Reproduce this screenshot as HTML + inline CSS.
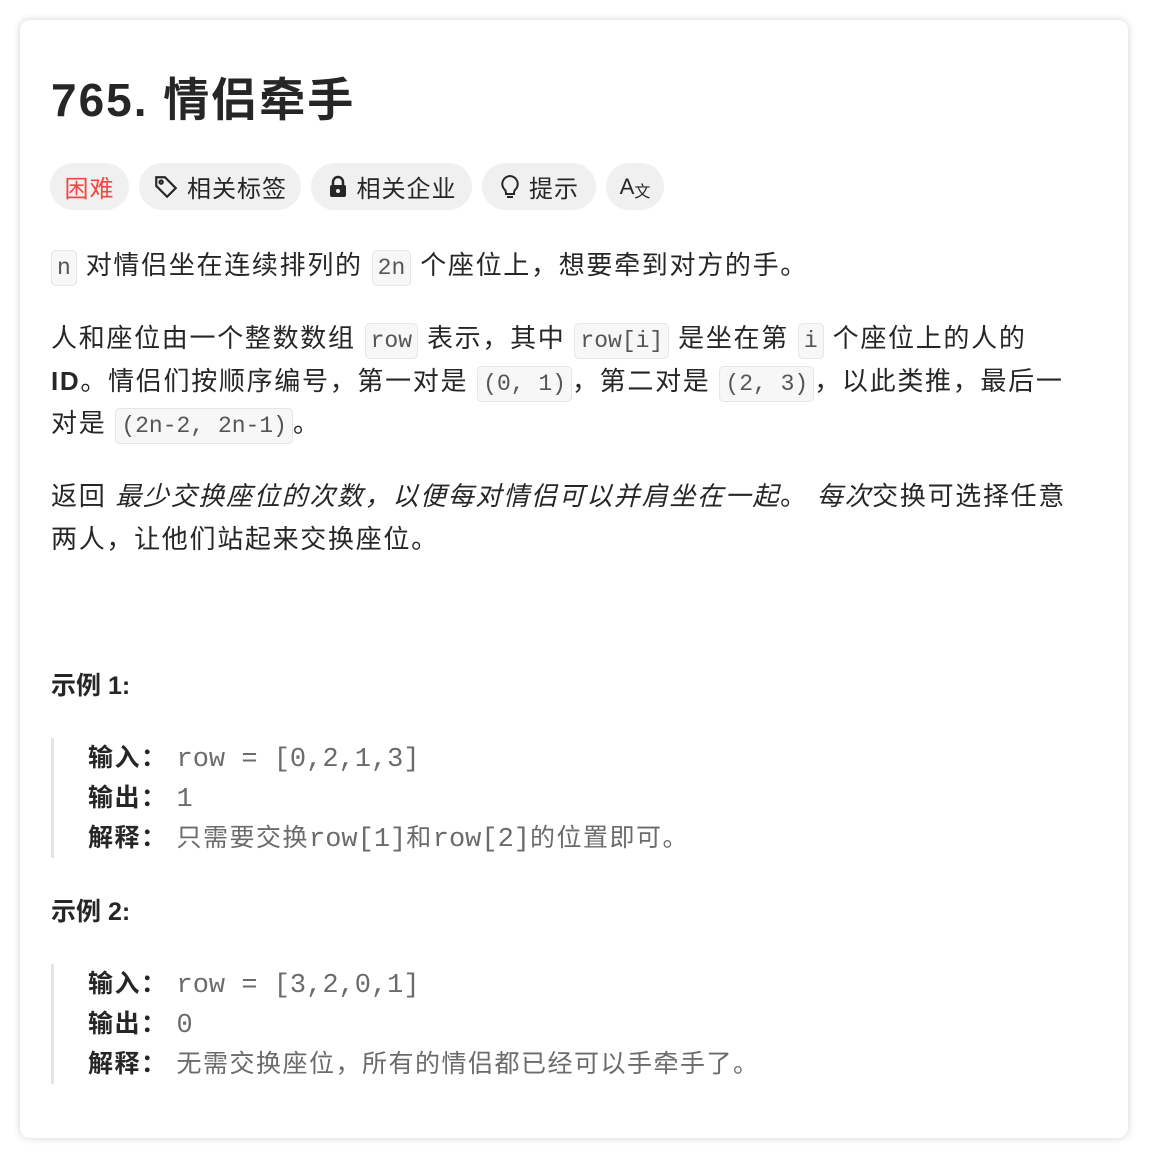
<!DOCTYPE html>
<html><head><meta charset="utf-8"><style>
body{margin:0;background:#fff;width:1150px;height:1160px;overflow:hidden;font-family:"Liberation Sans","Noto Sans CJK SC",sans-serif;color:#262626}
.card{position:absolute;left:20px;top:20px;width:1108px;height:1118px;background:#fff;border-radius:10px;box-shadow:0 0 8px rgba(0,0,0,.18)}
.in{position:absolute;left:31px;top:0;right:30px}
h1{margin:0;position:absolute;top:50px;font-size:46px;line-height:60px;font-weight:bold;letter-spacing:2px;white-space:nowrap}
.tags{position:absolute;top:143px;left:-1px;display:flex;gap:10px}
.tag{height:47px;border-radius:24px;background:#f0f0f0;display:flex;align-items:center;justify-content:center;font-size:24px;letter-spacing:1px;color:#262626;gap:8px;box-sizing:border-box}
p{margin:0;font-size:26px;letter-spacing:1.7px;line-height:42.5px;position:absolute;left:0;right:0;white-space:nowrap}
code{font-family:"Liberation Mono","DejaVu Sans Mono",monospace;font-size:23px;letter-spacing:0;line-height:1;background:#f7f7f7;border:1px solid #e6e6e6;border-radius:5px;padding:4px 5px;color:#555}
.ex{position:absolute;left:0;font-size:25px;font-weight:bold;line-height:40px}
.blk{position:absolute;left:0;border-left:3px solid #e5e5e5;padding-left:34px;font-size:25px;line-height:40px;letter-spacing:1.5px;white-space:nowrap}
.blk b{color:#262626}
.blk span{color:#6b6b6b}
.m{font-family:"Liberation Mono","DejaVu Sans Mono",monospace;font-size:27px;letter-spacing:0;line-height:1}
.g{margin-left:9px}
</style></head><body>
<div class="card"><div class="in">
<h1>765. 情侣牵手</h1>
<div class="tags">
<div class="tag" style="color:#ef4743;width:79px">困难</div>
<div class="tag" style="width:162px"><svg width="26" height="26" viewBox="0 0 24 24" fill="none" stroke="#262626" stroke-width="2"><path d="M3 3h8l10 10-8 8L3 11z"/><circle cx="7.5" cy="7.5" r="1.5"/></svg>相关标签</div>
<div class="tag" style="width:161px"><svg width="22" height="24" viewBox="0 0 22 24"><path d="M6 10V7a5 5 0 0110 0v3" fill="none" stroke="#262626" stroke-width="2.5"/><rect x="3" y="10" width="16" height="12" rx="2" fill="#262626"/><circle cx="11" cy="16" r="2" fill="#f0f0f0"/></svg>相关企业</div>
<div class="tag" style="width:114px"><svg width="22" height="28" viewBox="0 0 22 26" fill="none" stroke="#262626" stroke-width="2"><path d="M11 2a8 8 0 00-5 14c1 1 1 2 1 4h8c0-2 0-3 1-4a8 8 0 00-5-14z"/><path d="M8 23h6"/></svg>提示</div>
<div class="tag" style="width:58px;font-size:22px;gap:0;letter-spacing:0">A<span style="font-size:16px;margin-top:6px">文</span></div>
</div>
<p style="top:224px"><code>n</code> 对情侣坐在连续排列的 <code>2n</code> 个座位上，想要牵到对方的手。</p>
<p style="top:297px">人和座位由一个整数数组 <code>row</code> 表示，其中 <code>row[i]</code> 是坐在第 <code>i</code> 个座位上的人的<br><b>ID</b>。情侣们按顺序编号，第一对是 <code>(0, 1)</code>，第二对是 <code>(2, 3)</code>，以此类推，最后一<br>对是 <code>(2n-2, 2n-1)</code>。</p>
<p style="top:455px">返回 <i>最少交换座位的次数，以便每对情侣可以并肩坐在一起</i>。 <i>每次</i>交换可选择任意<br>两人，让他们站起来交换座位。</p>
<div class="ex" style="top:646px">示例 1:</div>
<div class="blk" style="top:718px"><b>输入：</b><span class="m g">row = [0,2,1,3]</span><br><b>输出：</b><span class="m g">1</span><br><b>解释：</b><span class="g">只需要交换<span class="m">row[1]</span>和<span class="m">row[2]</span>的位置即可。</span></div>
<div class="ex" style="top:872px">示例 2:</div>
<div class="blk" style="top:944px"><b>输入：</b><span class="m g">row = [3,2,0,1]</span><br><b>输出：</b><span class="m g">0</span><br><b>解释：</b><span class="g">无需交换座位，所有的情侣都已经可以手牵手了。</span></div>
</div></div>
</body></html>
